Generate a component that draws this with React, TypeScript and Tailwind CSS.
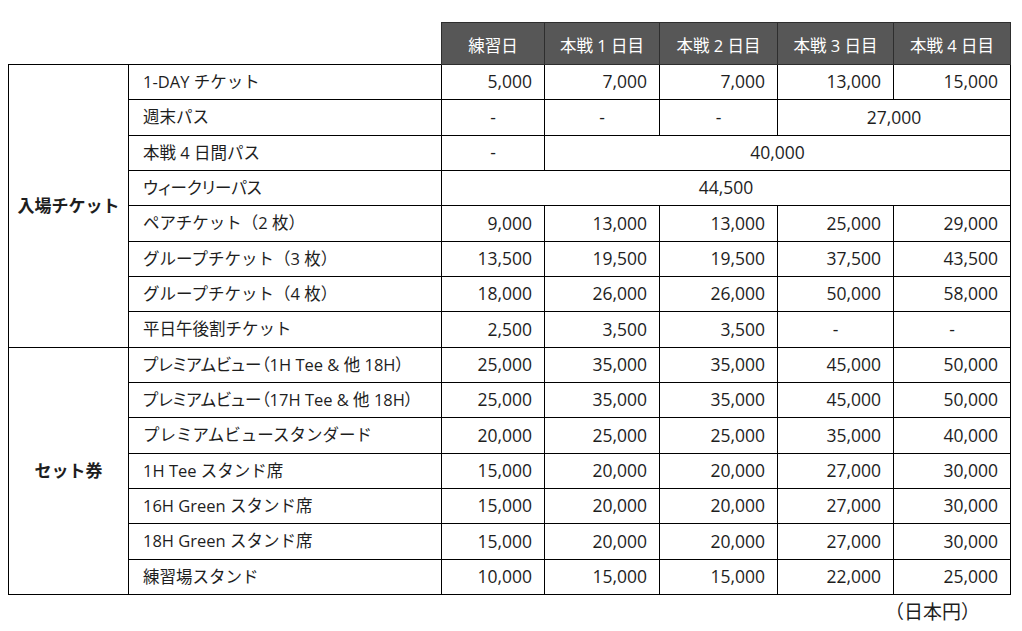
import React from "react";

type Cell = { v: string; span?: number; center?: boolean };

const num = (v: string): Cell => ({ v });
const dash: Cell = { v: "-", center: true };

type Row = { label: string; cells: Cell[]; palt?: boolean };

const group1: Row[] = [
  { label: "1-DAY チケット", cells: ["5,000", "7,000", "7,000", "13,000", "15,000"].map(num) },
  { label: "週末パス", cells: [dash, dash, dash, { v: "27,000", span: 2, center: true }] },
  { label: "本戦 4 日間パス", cells: [dash, { v: "40,000", span: 4, center: true }] },
  { label: "ウィークリーパス", cells: [{ v: "44,500", span: 5, center: true }], palt: true },
  { label: "ペアチケット（2 枚）", cells: ["9,000", "13,000", "13,000", "25,000", "29,000"].map(num) },
  { label: "グループチケット（3 枚）", cells: ["13,500", "19,500", "19,500", "37,500", "43,500"].map(num) },
  { label: "グループチケット（4 枚）", cells: ["18,000", "26,000", "26,000", "50,000", "58,000"].map(num) },
  { label: "平日午後割チケット", cells: [num("2,500"), num("3,500"), num("3,500"), dash, dash] },
];

const group2: Row[] = [
  { label: "プレミアムビュー（1H Tee & 他 18H）", cells: ["25,000", "35,000", "35,000", "45,000", "50,000"].map(num), palt: true },
  { label: "プレミアムビュー（17H Tee & 他 18H）", cells: ["25,000", "35,000", "35,000", "45,000", "50,000"].map(num), palt: true },
  { label: "プレミアムビュースタンダード", cells: ["20,000", "25,000", "25,000", "35,000", "40,000"].map(num) },
  { label: "1H Tee スタンド席", cells: ["15,000", "20,000", "20,000", "27,000", "30,000"].map(num) },
  { label: "16H Green スタンド席", cells: ["15,000", "20,000", "20,000", "27,000", "30,000"].map(num) },
  { label: "18H Green スタンド席", cells: ["15,000", "20,000", "20,000", "27,000", "30,000"].map(num) },
  { label: "練習場スタンド", cells: ["10,000", "15,000", "15,000", "22,000", "25,000"].map(num) },
];

const headers = ["練習日", "本戦 1 日目", "本戦 2 日目", "本戦 3 日目", "本戦 4 日目"];

function Rows({ title, rows }: { title: string; rows: Row[] }) {
  return (
    <>
      {rows.map((r, i) => (
        <tr key={r.label} className="h-[35.33px]">
          {i === 0 && (
            <td rowSpan={rows.length} className="border border-black text-center align-middle font-bold text-[17px]">
              {title}
            </td>
          )}
          <td
            className={
              r.palt
                ? "border border-black pl-[14px] text-left whitespace-nowrap [font-feature-settings:'palt']"
                : "border border-black pl-[14px] text-left whitespace-nowrap"
            }
          >
            {r.label}
          </td>
          {r.cells.map((c, j) => (
            <td
              key={j}
              colSpan={c.span}
              className={
                c.center
                  ? "border border-black text-center text-[17.5px]"
                  : "border border-black text-right pr-[12px] text-[17.5px]"
              }
            >
              {c.v}
            </td>
          ))}
        </tr>
      ))}
    </>
  );
}

export default function App() {
  return (
    <div
      className="w-[1022px] h-[631px] bg-white text-[#1e1e1e] pt-[22px] pl-[8px]"
      style={{ fontFamily: '"Open Sans", "Noto Sans CJK JP", sans-serif' }}
    >
      <table className="border-collapse table-fixed w-[1002px] text-[16.5px] leading-none">
        <colgroup>
          <col className="w-[120px]" />
          <col className="w-[313px]" />
          <col className="w-[103px]" />
          <col className="w-[115px]" />
          <col className="w-[118px]" />
          <col className="w-[116px]" />
          <col className="w-[117px]" />
        </colgroup>
        <thead>
          <tr className="h-[42px]">
            <th className="p-0"></th>
            <th className="p-0"></th>
            {headers.map((h) => (
              <th
                key={h}
                className="bg-[#575757] text-white font-normal text-center border border-[#2e2e2e] pt-[6px]"
              >
                {h}
              </th>
            ))}
          </tr>
        </thead>
        <tbody>
          <Rows title="入場チケット" rows={group1} />
          <Rows title="セット券" rows={group2} />
        </tbody>
      </table>
      <div className="w-[1002px] flex justify-end pr-[30px] pt-[8px] text-[19px] leading-none">
        （日本円）
      </div>
    </div>
  );
}
